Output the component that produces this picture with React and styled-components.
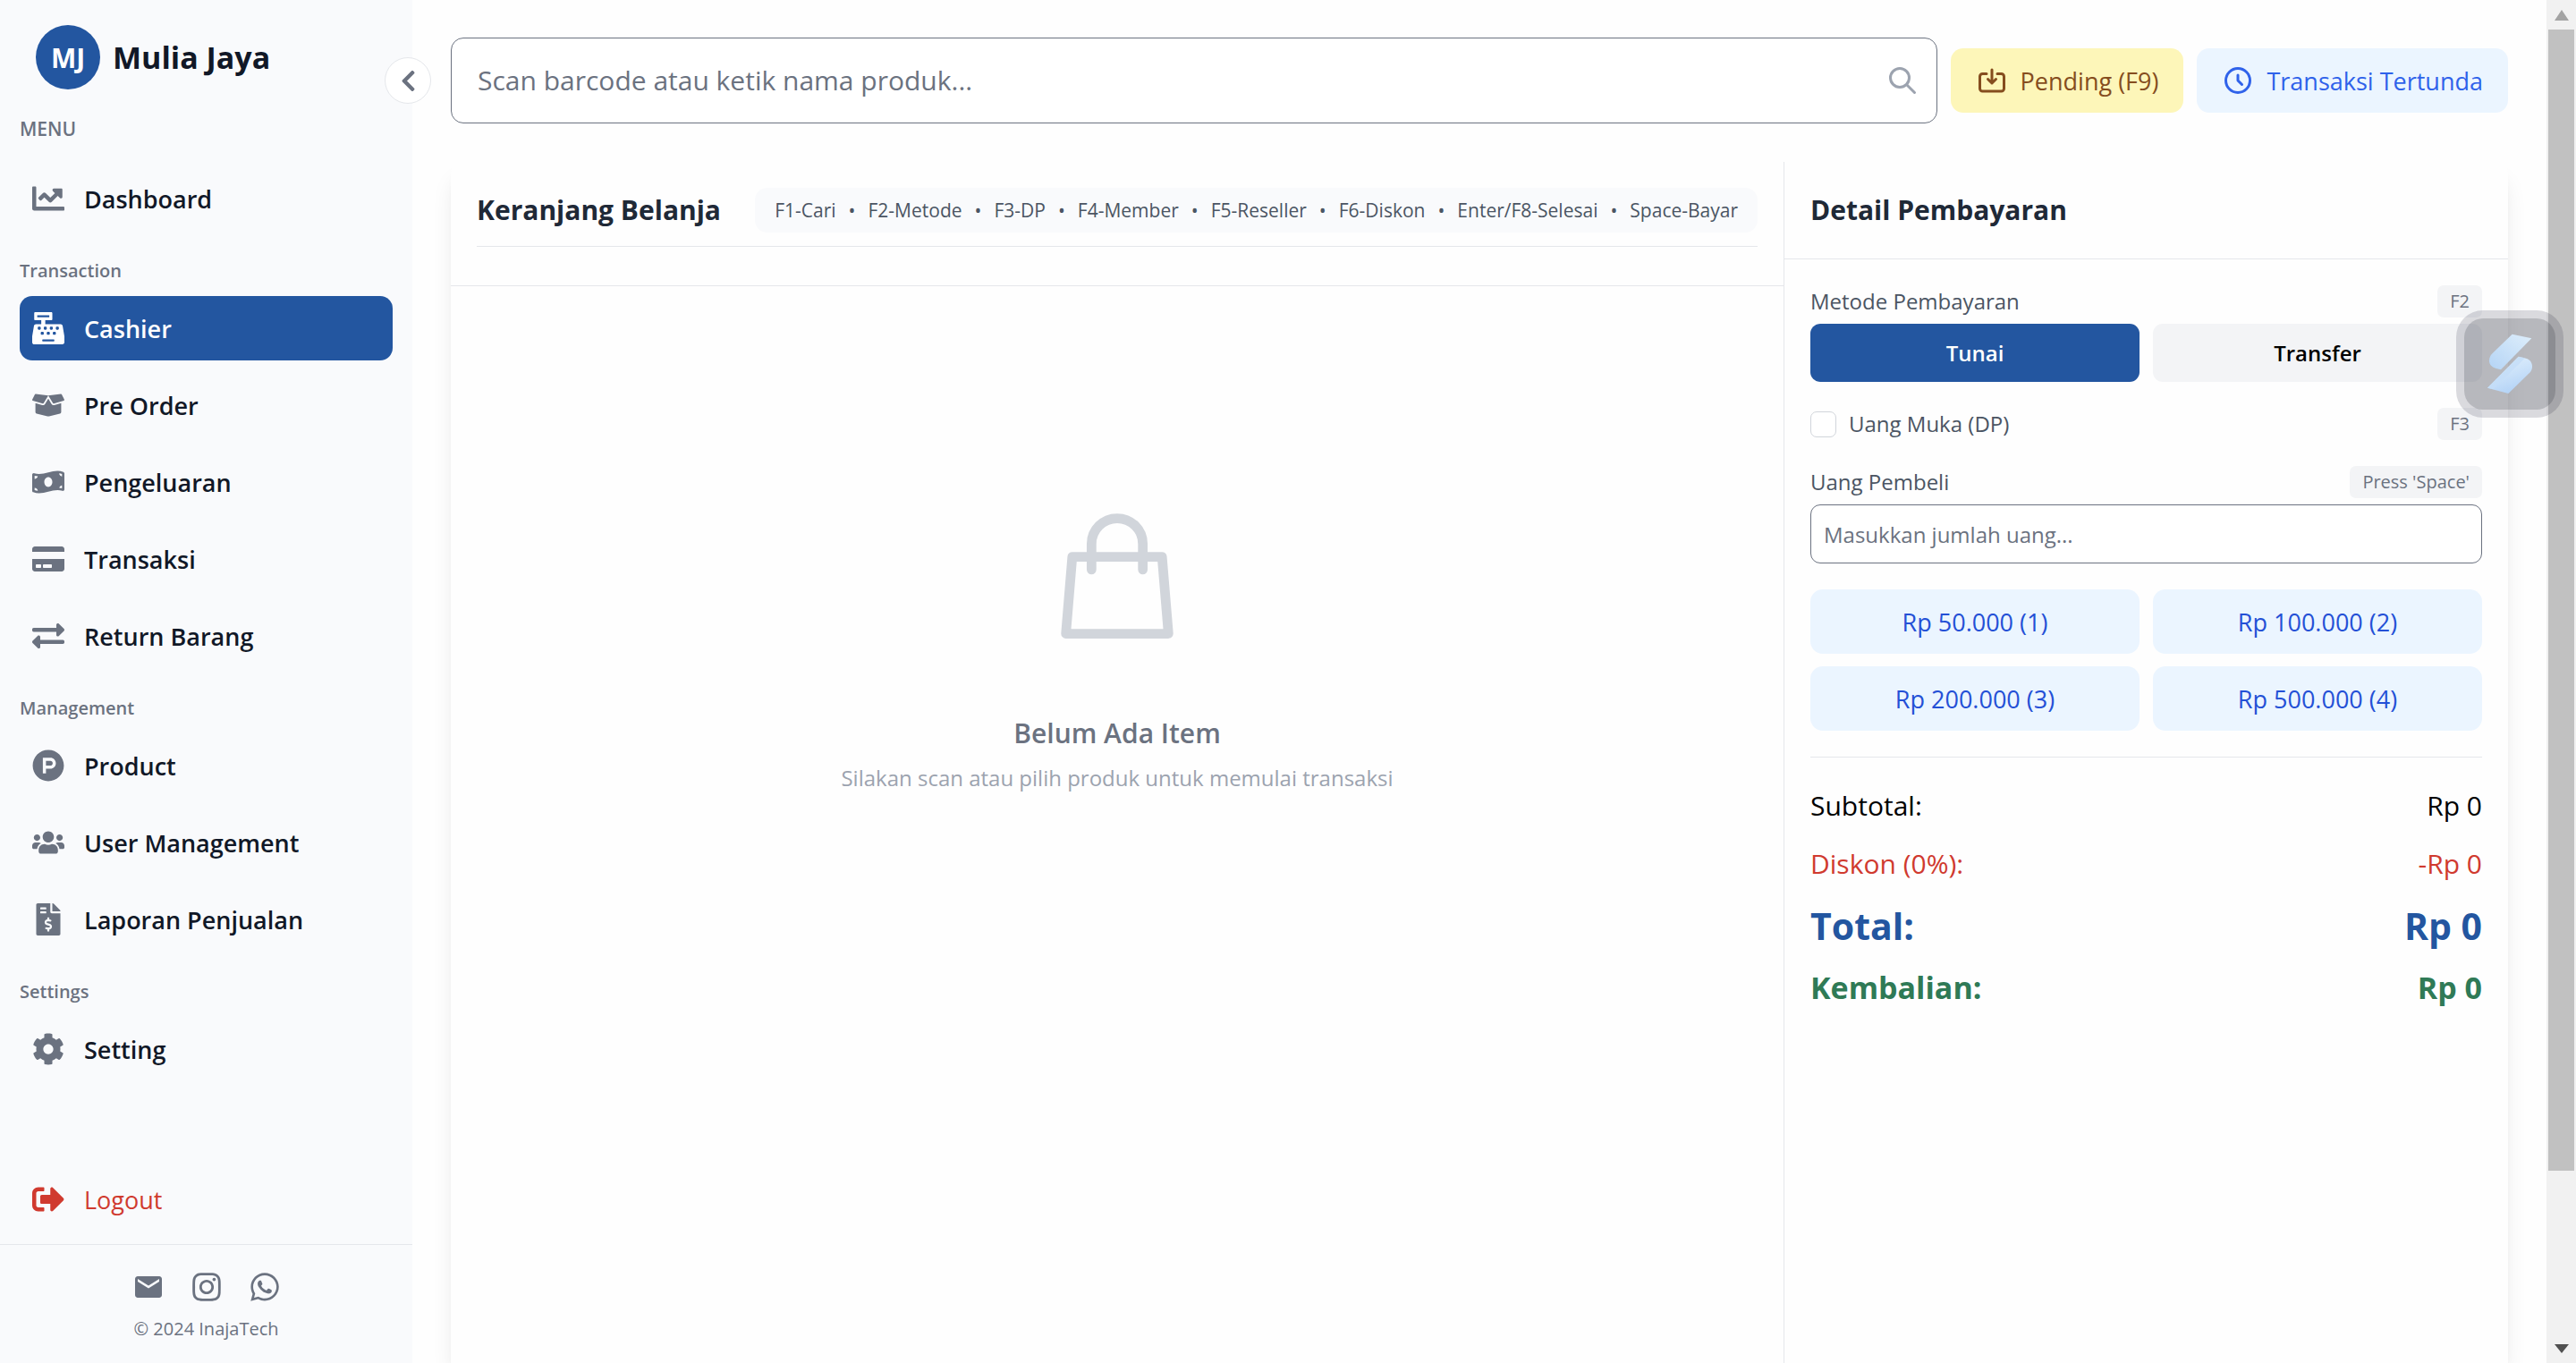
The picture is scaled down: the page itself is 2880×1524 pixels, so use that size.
import React from 'react';
import styled, { createGlobalStyle, css } from 'styled-components';
import {
  FaChartLine,
  FaCashRegister,
  FaBoxOpen,
  FaMoneyBillWave,
  FaCreditCard,
  FaExchangeAlt,
  FaProductHunt,
  FaUsers,
  FaFileInvoiceDollar,
  FaCog,
  FaSignOutAlt,
  FaChevronLeft,
  FaInstagram,
  FaWhatsapp,
} from 'react-icons/fa';
import { MdEmail } from 'react-icons/md';

const GlobalStyle = createGlobalStyle`
  *, *::before, *::after { box-sizing: border-box; }
  body {
    margin: 0;
    background: #fefefe;
    color: #000;
    font-family: 'Open Sans', 'Noto Sans', sans-serif;
    font-size: 27px;
    line-height: 43px;
  }
  h1, h2, h3, p, ul, dl, dd { margin: 0; padding: 0; }
  button, input { font: inherit; color: inherit; margin: 0; }
  button { border: 0; cursor: pointer; }
  a { color: inherit; text-decoration: none; }
  svg { display: block; flex-shrink: 0; }
`;

const gray = {
  50: '#f9fafb',
  100: '#f3f4f6',
  200: '#e5e7eb',
  300: '#d1d5db',
  400: '#9ca3af',
  500: '#6b7280',
  600: '#4b5563',
  800: '#1f2937',
  900: '#111827',
};
const brand = '#2356a0';

const Page = styled.div`
  display: flex;
  height: 100vh;
  overflow: hidden;
`;

/* ---------- Sidebar ---------- */

const Sidebar = styled.aside`
  position: relative;
  flex: 0 0 461px;
  display: flex;
  flex-direction: column;
  background: #f9fafc;
`;

const Brand = styled.div`
  display: flex;
  align-items: center;
  gap: 14px;
  padding: 28px 40px 0;
`;

const BrandBadge = styled.span`
  display: grid;
  place-items: center;
  width: 72px;
  height: 72px;
  border-radius: 50%;
  background: ${brand};
  color: #fff;
  font-size: 30px;
  font-weight: 700;
`;

const BrandName = styled.h1`
  color: ${gray[900]};
  font-size: 34px;
  line-height: 50px;
  font-weight: 700;
`;

const Collapse = styled.button`
  position: absolute;
  top: 64px;
  right: -21px;
  display: grid;
  place-items: center;
  width: 52px;
  height: 52px;
  padding: 0;
  border: 1px solid ${gray[200]};
  border-radius: 50%;
  background: #fff;
  color: ${gray[500]};
`;

const Nav = styled.nav`
  flex: 1;
  display: flex;
  flex-direction: column;
  padding: 30px 22px 0;
`;

const NavTitle = styled.p`
  margin-bottom: 27px;
  color: ${gray[500]};
  font-size: 21px;
  line-height: 29px;
  font-weight: 600;
`;

const GroupTitle = styled.h2`
  margin: 30px 0 14px;
  color: ${gray[500]};
  font-size: 20px;
  line-height: 29px;
  font-weight: 600;
`;

const NavList = styled.ul`
  display: flex;
  flex-direction: column;
  gap: 14px;
  list-style: none;
`;

const NavLink = styled.a`
  display: flex;
  align-items: center;
  gap: 22px;
  height: 72px;
  padding: 0 14px;
  border-radius: 14px;
  color: ${gray[900]};
  font-weight: 600;
  svg { color: ${gray[500]}; }
  ${(p) => p.$active && css`
    background: ${brand};
    color: #fff;
    svg { color: #fff; }
  `}
`;

const Logout = styled.button`
  display: flex;
  align-items: center;
  gap: 22px;
  height: 72px;
  margin: 0 22px 14px;
  padding: 0 14px;
  background: none;
  color: #d03a2f;
`;

const SideFooter = styled.footer`
  display: flex;
  flex-direction: column;
  align-items: center;
  gap: 14px;
  height: 133px;
  padding-top: 29px;
  border-top: 1px solid ${gray[200]};
  color: ${gray[500]};
  font-size: 20px;
  line-height: 29px;
`;

const Socials = styled.div`
  display: flex;
  gap: 29px;
`;

/* ---------- Main ---------- */

const Main = styled.main`
  flex: 1;
  min-width: 0;
  display: flex;
  flex-direction: column;
  gap: 43px;
  padding: 42px 43px 0;
`;

const TopBar = styled.div`
  display: flex;
  align-items: center;
  gap: 15px;
`;

const SearchBox = styled.label`
  flex: 1;
  display: flex;
  align-items: center;
  height: 96px;
  padding: 0 20px 0 29px;
  border: 1px solid ${gray[500]};
  border-radius: 14px;
  background: #fff;
`;

const SearchInput = styled.input`
  flex: 1;
  min-width: 0;
  padding: 0;
  border: 0;
  outline: 0;
  background: none;
  font-size: 30px;
  line-height: 50px;
  &::placeholder { color: ${gray[500]}; opacity: 1; }
`;

const ActionButton = styled.button`
  display: flex;
  align-items: center;
  gap: 14px;
  height: 72px;
  padding: 0 28px;
  border-radius: 14px;
  background: ${(p) => (p.$tone === 'yellow' ? '#fdf6b9' : '#ebf5ff')};
  color: ${(p) => (p.$tone === 'yellow' ? '#854d1e' : '#2f62ea')};
`;

const Card = styled.section`
  flex: 1;
  display: grid;
  grid-template-columns: minmax(0, 1491fr) minmax(0, 809fr);
  border-radius: 14px 14px 0 0;
  background: #fefefe;
  box-shadow: 0 18px 27px -5px rgba(0, 0, 0, 0.1), 0 7px 11px -7px rgba(0, 0, 0, 0.1);
`;

const Cart = styled.div`
  border-right: 1px solid ${gray[200]};
`;

const CartHead = styled.header`
  padding: 29px 29px 43px;
  border-bottom: 1px solid ${gray[200]};
`;

const CartHeadRow = styled.div`
  display: flex;
  align-items: center;
  justify-content: space-between;
  padding-bottom: 15px;
  border-bottom: 1px solid ${gray[200]};
`;

const PanelTitle = styled.h2`
  color: ${gray[800]};
  font-size: 30px;
  line-height: 50px;
  font-weight: 700;
`;

const Shortcuts = styled.div`
  display: flex;
  align-items: center;
  gap: 14px;
  height: 50px;
  padding: 0 22px;
  border-radius: 14px;
  background: #f9fafc;
  color: ${gray[600]};
  font-size: 21px;
  line-height: 29px;
  white-space: nowrap;
`;

const Empty = styled.div`
  display: flex;
  flex-direction: column;
  align-items: center;
  padding-top: 238px;
`;

const EmptyTitle = styled.h3`
  margin-top: 65px;
  color: ${gray[500]};
  font-size: 30px;
  line-height: 50px;
  font-weight: 600;
`;

const EmptyText = styled.p`
  margin-top: 7px;
  color: ${gray[400]};
  font-size: 24px;
  line-height: 36px;
`;

const PaymentHead = styled.header`
  padding: 29px;
  border-bottom: 1px solid ${gray[200]};
`;

const PaymentBody = styled.div`
  display: flex;
  flex-direction: column;
  padding: 29px;
`;

const FieldHead = styled.div`
  display: flex;
  align-items: center;
  justify-content: space-between;
  height: 36px;
  margin-top: ${(p) => (p.$spaced ? '29px' : '0')};
  color: ${gray[600]};
  font-size: 24px;
  line-height: 36px;
`;

const Kbd = styled.kbd`
  padding: 0 14px;
  border-radius: 7px;
  background: ${gray[100]};
  color: ${gray[500]};
  font-family: inherit;
  font-size: 20px;
  line-height: 36px;
`;

const TwoCols = styled.div`
  display: grid;
  grid-template-columns: 1fr 1fr;
  gap: 14px 15px;
  margin-top: ${(p) => p.$top}px;
`;

const MethodButton = styled.button`
  height: 65px;
  padding: 0;
  border-radius: 11px;
  background: ${(p) => (p.$active ? brand : gray[100])};
  color: ${(p) => (p.$active ? '#fff' : '#000')};
  font-size: 24px;
  line-height: 36px;
  font-weight: 600;
`;

const CheckLabel = styled.label`
  display: flex;
  align-items: center;
  gap: 14px;
`;

const CheckBox = styled.input`
  appearance: none;
  width: 29px;
  height: 29px;
  border: 1px solid ${gray[300]};
  border-radius: 7px;
  background: #fff;
`;

const MoneyInput = styled.input`
  height: 66px;
  margin-top: 7px;
  padding: 0 14px;
  border: 1px solid ${gray[500]};
  border-radius: 11px;
  outline: 0;
  background: #fff;
  font-size: 24px;
  line-height: 36px;
  &::placeholder { color: ${gray[500]}; opacity: 1; }
`;

const QuickButton = styled.button`
  height: 72px;
  padding: 0;
  border-radius: 14px;
  background: #ebf5ff;
  color: #2450d6;
`;

const Summary = styled.dl`
  display: flex;
  flex-direction: column;
  gap: 15px;
  margin-top: 29px;
  padding-top: 29px;
  border-top: 1px solid ${gray[200]};
`;

const summaryTones = {
  plain: css`color: #000; font-size: 30px; line-height: 50px;`,
  discount: css`color: #d03a2f; font-size: 30px; line-height: 50px;`,
  total: css`color: ${brand}; font-size: 41px; line-height: 58px; font-weight: 700;`,
  change: css`color: #2f7a56; font-size: 34px; line-height: 50px; font-weight: 700;`,
};

const SummaryRow = styled.div`
  display: flex;
  justify-content: space-between;
  ${(p) => summaryTones[p.$tone]}
`;

/* ---------- Window scrollbar and floating launcher ---------- */

const ScrollTrack = styled.div`
  flex: 0 0 33px;
  display: grid;
  grid-template-rows: 33px 1fr 33px;
  justify-items: center;
  align-items: center;
  background: #f1f1f1;
`;

const ScrollThumb = styled.div`
  align-self: start;
  width: 29px;
  height: 87.5%;
  background: #c1c1c1;
`;

const Launcher = styled.button`
  position: fixed;
  top: 347px;
  right: 14px;
  width: 120px;
  height: 120px;
  padding: 0;
  border: 9px solid rgba(12, 16, 40, 0.15);
  border-radius: 30px;
  background: rgba(20, 24, 40, 0.3) padding-box;
  display: grid;
  place-items: center;
`;

/* ---------- Icons ---------- */

const SearchIcon = () => (
  <svg width="36" height="36" viewBox="0 0 24 24" fill="none" stroke={gray[400]} strokeWidth="2" strokeLinecap="round" strokeLinejoin="round">
    <path d="M21 21l-6-6m2-5a7 7 0 11-14 0 7 7 0 0114 0z" />
  </svg>
);

const SaveIcon = () => (
  <svg width="36" height="36" viewBox="0 0 24 24" fill="none" stroke="currentColor" strokeWidth="2" strokeLinecap="round" strokeLinejoin="round">
    <path d="M8 7H5a2 2 0 00-2 2v9a2 2 0 002 2h14a2 2 0 002-2V9a2 2 0 00-2-2h-3m-1 4l-3 3m0 0l-3-3m3 3V4" />
  </svg>
);

const ClockIcon = () => (
  <svg width="36" height="36" viewBox="0 0 24 24" fill="none" stroke="currentColor" strokeWidth="2" strokeLinecap="round" strokeLinejoin="round">
    <path d="M12 8v4l3 3m6-3a9 9 0 11-18 0 9 9 0 0118 0z" />
  </svg>
);

const BagIcon = () => (
  <svg width="172" height="172" viewBox="0 0 24 24" fill="none" stroke={gray[300]} strokeWidth="1.5" strokeLinecap="round" strokeLinejoin="round">
    <path d="M16 11V7a4 4 0 00-8 0v4M5 9h14l1 12H4L5 9z" />
  </svg>
);

const LauncherLogo = () => (
  <svg width="102" height="102" viewBox="105 78 306 306">
    <defs>
      <linearGradient id="upper" x1="1" y1="0" x2="0" y2="1">
        <stop offset="0" stopColor="#deeefb" />
        <stop offset="1" stopColor="#b4d4f6" />
      </linearGradient>
      <linearGradient id="lower" x1="0.3" y1="0" x2="0.7" y2="1">
        <stop offset="0" stopColor="#e2f0fc" />
        <stop offset="1" stopColor="#b0d1f6" />
      </linearGradient>
    </defs>
    <path fill="url(#upper)" d="M266 131L331 145L228 250L212 246C196 241 189 232 189 220C189 210 193 202 200 195Z" />
    <path fill="url(#lower)" d="M287 206L312 212C327 216 334 228 333 242C332 250 329 256 323 262L253 330L183 311Z" />
    <path fill="#c4ddf7" opacity="0.8" d="M287 206L309 211L203 316L183 311Z" />
  </svg>
);

const UpArrow = () => (
  <svg width="16" height="12" viewBox="0 0 16 12"><path d="M0 12L8 0L16 12Z" fill="#a3a3a3" /></svg>
);

const DownArrow = () => (
  <svg width="16" height="10" viewBox="0 0 16 10"><path d="M0 0H16L8 10Z" fill="#505050" /></svg>
);

/* ---------- Data ---------- */

const groups = [
  {
    title: 'Transaction',
    items: [
      { label: 'Cashier', icon: FaCashRegister, active: true },
      { label: 'Pre Order', icon: FaBoxOpen },
      { label: 'Pengeluaran', icon: FaMoneyBillWave },
      { label: 'Transaksi', icon: FaCreditCard },
      { label: 'Return Barang', icon: FaExchangeAlt },
    ],
  },
  {
    title: 'Management',
    items: [
      { label: 'Product', icon: FaProductHunt },
      { label: 'User Management', icon: FaUsers },
      { label: 'Laporan Penjualan', icon: FaFileInvoiceDollar },
    ],
  },
  { title: 'Settings', items: [{ label: 'Setting', icon: FaCog }] },
];

const shortcuts = ['F1-Cari', 'F2-Metode', 'F3-DP', 'F4-Member', 'F5-Reseller', 'F6-Diskon', 'Enter/F8-Selesai', 'Space-Bayar'];

const quickAmounts = ['Rp 50.000 (1)', 'Rp 100.000 (2)', 'Rp 200.000 (3)', 'Rp 500.000 (4)'];

const summary = [
  { label: 'Subtotal:', value: 'Rp 0', tone: 'plain' },
  { label: 'Diskon (0%):', value: '-Rp 0', tone: 'discount' },
  { label: 'Total:', value: 'Rp 0', tone: 'total' },
  { label: 'Kembalian:', value: 'Rp 0', tone: 'change' },
];

function NavItem({ label, icon: Icon, active }) {
  return (
    <li>
      <NavLink href="#" $active={active} aria-current={active ? 'page' : undefined}>
        <Icon size={36} />
        {label}
      </NavLink>
    </li>
  );
}

export default function App() {
  return (
    <>
      <GlobalStyle />
      <Page>
        <Sidebar>
          <Brand>
            <BrandBadge>MJ</BrandBadge>
            <BrandName>Mulia Jaya</BrandName>
          </Brand>
          <Collapse type="button" aria-label="Collapse sidebar">
            <FaChevronLeft size={27} />
          </Collapse>
          <Nav>
            <NavTitle>MENU</NavTitle>
            <NavList>
              <NavItem label="Dashboard" icon={FaChartLine} />
            </NavList>
            {groups.map((group) => (
              <React.Fragment key={group.title}>
                <GroupTitle>{group.title}</GroupTitle>
                <NavList>
                  {group.items.map((item) => <NavItem key={item.label} {...item} />)}
                </NavList>
              </React.Fragment>
            ))}
          </Nav>
          <Logout type="button">
            <FaSignOutAlt size={36} />
            Logout
          </Logout>
          <SideFooter>
            <Socials>
              <a href="#" aria-label="Email"><MdEmail size={36} /></a>
              <a href="#" aria-label="Instagram"><FaInstagram size={36} /></a>
              <a href="#" aria-label="WhatsApp"><FaWhatsapp size={36} /></a>
            </Socials>
            <p>© 2024 InajaTech</p>
          </SideFooter>
        </Sidebar>

        <Main>
          <TopBar>
            <SearchBox>
              <SearchInput type="text" aria-label="Cari produk" placeholder="Scan barcode atau ketik nama produk..." />
              <SearchIcon />
            </SearchBox>
            <ActionButton type="button" $tone="yellow">
              <SaveIcon />
              Pending (F9)
            </ActionButton>
            <ActionButton type="button" $tone="blue">
              <ClockIcon />
              Transaksi Tertunda
            </ActionButton>
          </TopBar>

          <Card>
            <Cart>
              <CartHead>
                <CartHeadRow>
                  <PanelTitle>Keranjang Belanja</PanelTitle>
                  <Shortcuts>
                    {shortcuts.map((text, i) => (
                      <React.Fragment key={text}>
                        {i > 0 && <span>•</span>}
                        <span>{text}</span>
                      </React.Fragment>
                    ))}
                  </Shortcuts>
                </CartHeadRow>
              </CartHead>
              <Empty>
                <BagIcon />
                <EmptyTitle>Belum Ada Item</EmptyTitle>
                <EmptyText>Silakan scan atau pilih produk untuk memulai transaksi</EmptyText>
              </Empty>
            </Cart>

            <div>
              <PaymentHead>
                <PanelTitle>Detail Pembayaran</PanelTitle>
              </PaymentHead>
              <PaymentBody>
                <FieldHead>
                  <span>Metode Pembayaran</span>
                  <Kbd>F2</Kbd>
                </FieldHead>
                <TwoCols $top={7}>
                  <MethodButton type="button" $active>Tunai</MethodButton>
                  <MethodButton type="button">Transfer</MethodButton>
                </TwoCols>
                <FieldHead $spaced>
                  <CheckLabel>
                    <CheckBox type="checkbox" />
                    Uang Muka (DP)
                  </CheckLabel>
                  <Kbd>F3</Kbd>
                </FieldHead>
                <FieldHead $spaced>
                  <label htmlFor="cash">Uang Pembeli</label>
                  <Kbd>Press 'Space'</Kbd>
                </FieldHead>
                <MoneyInput id="cash" type="text" placeholder="Masukkan jumlah uang..." />
                <TwoCols $top={29}>
                  {quickAmounts.map((amount) => (
                    <QuickButton type="button" key={amount}>{amount}</QuickButton>
                  ))}
                </TwoCols>
                <Summary>
                  {summary.map((row) => (
                    <SummaryRow key={row.label} $tone={row.tone}>
                      <dt>{row.label}</dt>
                      <dd>{row.value}</dd>
                    </SummaryRow>
                  ))}
                </Summary>
              </PaymentBody>
            </div>
          </Card>
        </Main>

        <ScrollTrack aria-hidden="true">
          <UpArrow />
          <ScrollThumb />
          <DownArrow />
        </ScrollTrack>
      </Page>
      <Launcher type="button" aria-label="Open assistant">
        <LauncherLogo />
      </Launcher>
    </>
  );
}
